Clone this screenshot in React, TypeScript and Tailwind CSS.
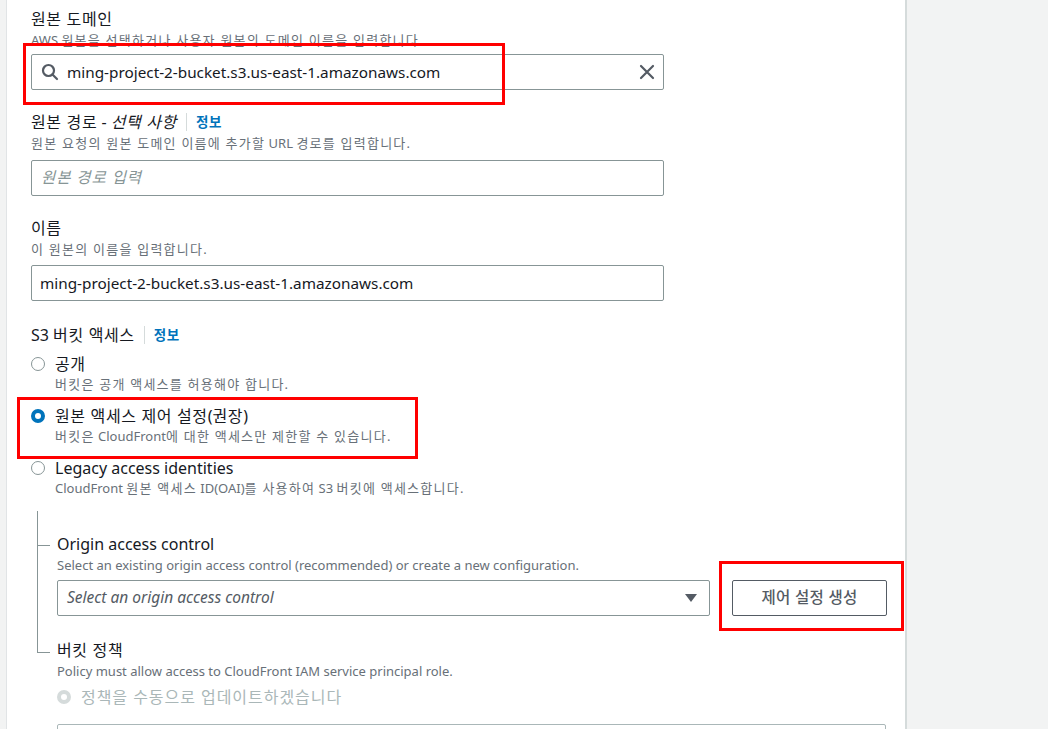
import React from 'react';

const FONT = { fontFamily: '"Noto Sans", "Noto Sans CJK KR", sans-serif' };

// 한글 구간만 자간을 넓혀 원본 렌더링 폭에 맞춘다
const Ko = ({ text, wide = false }: { text: string; wide?: boolean }) => {
  const parts = text.split(/([\uAC00-\uD7A3]+(?:\s+[\uAC00-\uD7A3]+)*)/);
  return (
    <>
      {parts.map((p, i) =>
        /[\uAC00-\uD7A3]/.test(p) ? (
          <span key={i} className={wide ? 'tracking-[0.095em]' : 'tracking-[0.04em]'}>{p}</span>
        ) : (
          <span key={i}>{p}</span>
        )
      )}
    </>
  );
};

const Radio = ({ state }: { state: 'off' | 'on' | 'disabled' }) => {
  if (state === 'on') {
    return <span className="w-[14px] h-[14px] rounded-full border-[4px] border-[#0073bb] bg-white shrink-0" />;
  }
  if (state === 'disabled') {
    return <span className="w-[14px] h-[14px] rounded-full border-[4px] border-[#d5dbdb] bg-white shrink-0" />;
  }
  return <span className="w-[14px] h-[14px] rounded-full border-[1.5px] border-[#879596] bg-white shrink-0" />;
};

const Info = () => (
  <>
    <span className="mx-[9px] h-[18px] w-px bg-[#d5dbdb]" />
    <span className="text-[13.5px] font-bold text-[#0073bb] tracking-[0.04em]">정보</span>
  </>
);

const RedBox = ({ className }: { className: string }) => (
  <div className={`absolute border-[3px] border-[#ff0000] pointer-events-none ${className}`} />
);

const Desc = ({ text, tight = false }: { text: string; tight?: boolean }) => (
  <div className={`text-[13px] text-[#687078] whitespace-nowrap ${tight ? 'leading-[18px]' : 'leading-[20px]'}`}>
    <Ko text={text} wide />
  </div>
);

export default function App() {
  return (
    <div className="flex w-[1048px] h-[729px] overflow-hidden bg-[#f2f3f3]" style={FONT}>
      <div className="w-[7px] bg-[#f2f3f3] border-r border-[#e1e4e6]" />
      <div className="w-[900px] bg-white border-r-[2px] border-[#d5dbdb] pl-[24px] pt-[8px] text-[#16191f]">
        <div className="w-[633px]">
          {/* 원본 도메인 */}
          <div className="relative">
            <div className="text-[16px] leading-[22px]"><Ko text="원본 도메인" /></div>
            <Desc text="AWS 원본을 선택하거나 사용자 원본의 도메인 이름을 입력합니다." />
            <div className="mt-[4px] h-[36px] border border-[#879596] rounded-[2px] flex items-center pl-[8px] pr-[8px]">
              <svg width="20" height="20" viewBox="0 0 20 20" fill="none" stroke="#545b64" strokeWidth="2.2" strokeLinecap="round">
                <circle cx="8.5" cy="8.5" r="5.5" />
                <path d="M12.5 12.5 L17 17" />
              </svg>
              <span className="ml-[7px] text-[15.3px] text-[#16191f] flex-1">ming-project-2-bucket.s3.us-east-1.amazonaws.com</span>
              <svg width="16" height="16" viewBox="0 0 16 16" fill="none" stroke="#545b64" strokeWidth="2.2" strokeLinecap="round">
                <path d="M2 2 L14 14 M14 2 L2 14" />
              </svg>
            </div>
            <RedBox className="left-[-8px] top-[35px] w-[482px] h-[62px]" />
          </div>

          {/* 원본 경로 */}
          <div className="mt-[21px]">
            <div className="flex items-center text-[16px] leading-[22px]">
              <span><Ko text="원본 경로" /> - <i className="tracking-[0.04em]">선택 사항</i></span>
              <Info />
            </div>
            <Desc text="원본 요청의 원본 도메인 이름에 추가할 URL 경로를 입력합니다." />
            <div className="mt-[7px] h-[36px] border border-[#879596] rounded-[2px] flex items-center px-[9px]">
              <i className="text-[15.5px] text-[#879596] tracking-[0.06em]">원본 경로 입력</i>
            </div>
          </div>

          {/* 이름 */}
          <div className="mt-[21px]">
            <div className="text-[16px] leading-[22px]"><Ko text="이름" /></div>
            <Desc text="이 원본의 이름을 입력합니다." />
            <div className="mt-[6px] h-[36px] border border-[#879596] rounded-[2px] flex items-center px-[8px]">
              <span className="text-[15.3px]">ming-project-2-bucket.s3.us-east-1.amazonaws.com</span>
            </div>
          </div>

          {/* S3 버킷 액세스 */}
          <div className="mt-[23px]">
            <div className="flex items-center text-[16px] leading-[22px]">
              <span><Ko text="S3 버킷 액세스" /></span>
              <Info />
            </div>

            <div className="mt-[7px] flex items-start gap-[10px]">
              <div className="h-[22px] flex items-center"><Radio state="off" /></div>
              <div>
                <div className="text-[16px] leading-[22px]"><Ko text="공개" /></div>
                <Desc text="버킷은 공개 액세스를 허용해야 합니다." tight />
              </div>
            </div>

            <div className="relative mt-[12px] flex items-start gap-[10px]">
              <div className="h-[22px] flex items-center"><Radio state="on" /></div>
              <div>
                <div className="text-[16px] leading-[22px]"><Ko text="원본 액세스 제어 설정(권장)" /></div>
                <Desc text="버킷은 CloudFront에 대한 액세스만 제한할 수 있습니다." tight />
              </div>
              <RedBox className="left-[-14px] top-[-8px] w-[401px] h-[62px]" />
            </div>

            <div className="mt-[12px] flex items-start gap-[10px]">
              <div className="h-[22px] flex items-center"><Radio state="off" /></div>
              <div>
                <div className="text-[16px] leading-[22px]">Legacy access identities</div>
                <Desc text="CloudFront 원본 액세스 ID(OAI)를 사용하여 S3 버킷에 액세스합니다." tight />
              </div>
            </div>
          </div>
        </div>

        {/* 하위 설정 트리 */}
        <div className="relative ml-[6px] mt-[14px] pl-[20px] pt-[22px]">
          <span className="absolute left-0 top-0 w-px h-[141px] bg-[#879596]" />
          <span className="absolute left-0 top-[34px] w-[13px] h-px bg-[#879596]" />
          <span className="absolute left-0 top-[141px] w-[13px] h-px bg-[#879596]" />

          <div className="text-[16px] leading-[22px]">Origin access control</div>
          <div className="text-[13px] leading-[20px] text-[#687078]">Select an existing origin access control (recommended) or create a new configuration.</div>
          <div className="relative mt-[5px] flex items-center gap-[22px]">
            <div className="w-[653px] h-[36px] border border-[#879596] rounded-[2px] flex items-center pl-[9px] pr-[12px]">
              <i className="flex-1 text-[15.5px] text-[#545b64]">Select an origin access control</i>
              <svg width="12" height="10" viewBox="0 0 12 10">
                <path d="M0 1 L12 1 L6 9 Z" fill="#545b64" />
              </svg>
            </div>
            <button className="w-[155px] h-[36px] border border-[#545b64] rounded-[2px] text-[15.5px] font-medium text-[#545b64] tracking-[0.02em]">제어 설정 생성</button>
            <RedBox className="left-[662px] top-[-19px] w-[185px] h-[70px]" />
          </div>

          <div className="mt-[23px] text-[16px] leading-[22px]"><Ko text="버킷 정책" /></div>
          <div className="text-[13px] leading-[20px] text-[#687078]">Policy must allow access to CloudFront IAM service principal role.</div>
          <div className="mt-[5px] flex items-center gap-[10px] h-[22px]">
            <Radio state="disabled" />
            <span className="text-[16px] text-[#aab7b8] tracking-[0.06em]">정책을 수동으로 업데이트하겠습니다</span>
          </div>
          <div className="mt-[16px] w-[829px] h-[36px] border border-[#aab7b8] rounded-[2px]" />
        </div>
      </div>
      <div className="flex-1 bg-[#f2f3f3]" />
    </div>
  );
}
